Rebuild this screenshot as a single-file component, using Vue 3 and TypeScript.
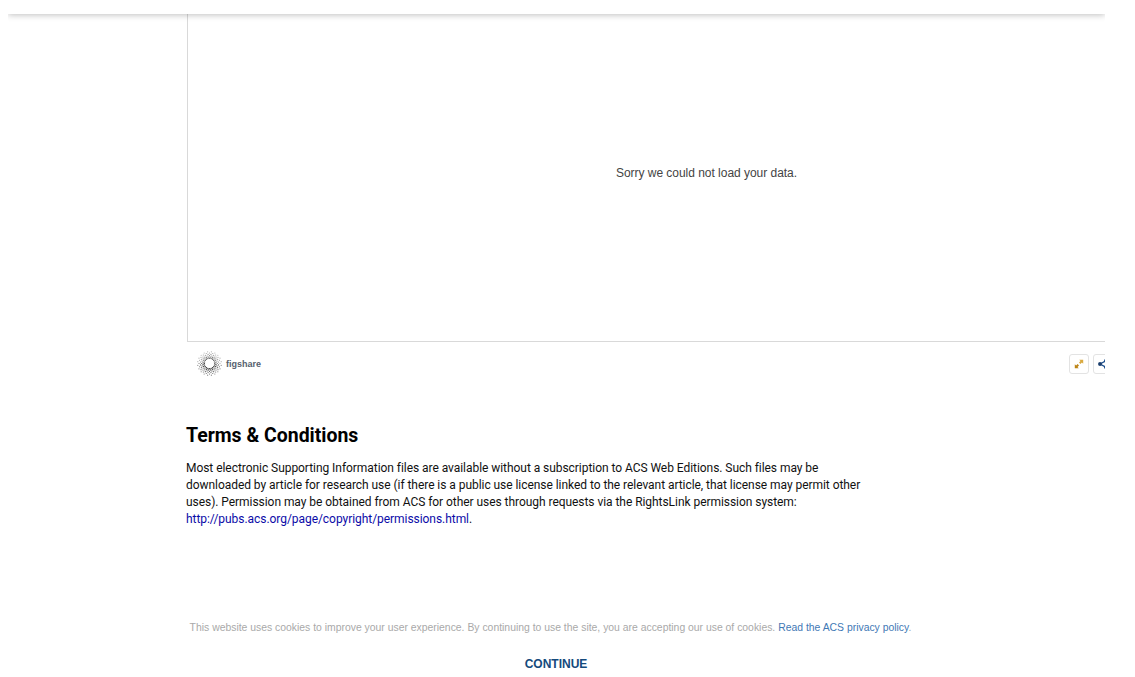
<script setup lang="ts">
const dots: { x: number; y: number; r: number; o: number }[] = []
for (let ring = 0; ring < 6; ring++) {
  const rad = 5.2 + ring * 1.32
  for (let i = 0; i < 20; i++) {
    const a = ((i + ring * 0.5) / 20) * Math.PI * 2
    dots.push({
      x: 12.5 + rad * Math.cos(a),
      y: 12.5 + rad * Math.sin(a),
      r: 0.68 - ring * 0.03,
      o: (Math.sin(a) > 0 ? 0.95 : 0.7) - ring * 0.06
    })
  }
}
</script>

<template>
  <div class="page">
    <div class="frame">
      <header class="topbar"></header>
      <main class="content">
        <section class="viewer">
          <div class="stage">
            <p class="error">Sorry we could not load your data.</p>
          </div>
          <div class="toolbar">
            <div class="brand">
              <svg class="logo" viewBox="0 0 25 25" width="25" height="25" aria-hidden="true">
                <circle v-for="(d, i) in dots" :key="i" :cx="d.x" :cy="d.y" :r="d.r" fill="#2a2a2a" :opacity="d.o" />
              </svg>
              <span class="brand-name">figshare</span>
            </div>
            <div class="actions">
              <button class="tool" type="button" aria-label="Expand">
                <svg viewBox="0 0 10 10" width="10" height="10" aria-hidden="true">
                  <path d="M5.2.8h4v4l-1.3-1.3-1.5 1.5-1.4-1.4 1.5-1.5z" fill="#d9a93f" />
                  <path d="M4.8 9.2h-4v-4l1.3 1.3 1.5-1.5 1.4 1.4-1.5 1.5z" fill="#bd8516" />
                </svg>
              </button>
              <button class="tool" type="button" aria-label="Share">
                <svg class="share" viewBox="0 0 10 10" width="12" height="12" aria-hidden="true">
                  <path d="M7.5 2.3 2.5 5l5 2.7" fill="none" stroke="#1c4f8c" stroke-width="1" />
                  <circle cx="7.5" cy="2.3" r="1.6" fill="#1c4f8c" />
                  <circle cx="2.5" cy="5" r="1.6" fill="#1c3f6e" />
                  <circle cx="7.5" cy="7.7" r="1.6" fill="#1c4f8c" />
                </svg>
              </button>
            </div>
          </div>
        </section>
        <section class="terms">
          <h2>Terms &amp; Conditions</h2>
          <p>
            Most electronic Supporting Information files are available without a subscription to ACS Web Editions. Such files may be
            downloaded by article for research use (if there is a public use license linked to the relevant article, that license may permit other
            uses). Permission may be obtained from ACS for other uses through requests via the RightsLink permission system:
            <a href="#">http://pubs.acs.org/page/copyright/permissions.html</a>.
          </p>
        </section>
        <section class="cookies">
          <p class="notice">
            This website uses cookies to improve your user experience. By continuing to use the site, you are accepting our use of cookies.
            <a href="#">Read the ACS privacy policy</a>.
          </p>
          <button class="continue" type="button">CONTINUE</button>
        </section>
      </main>
    </div>
  </div>
</template>

<style>
html, body { margin: 0; background: #fff; overflow: hidden; }
</style>

<style scoped>
.page {
  width: 1135px;
  height: 677px;
  overflow: hidden;
  background: #fff;
}
.frame {
  width: 1097px;
  height: 677px;
  margin-left: 8px;
  overflow: hidden;
  position: relative;
}
.topbar {
  height: 14px;
  background: #fff;
  box-shadow: 0 1px 6px rgba(0, 0, 0, 0.25);
  position: relative;
  z-index: 2;
  clip-path: inset(0 0 -12px 0);
}
.content {
  padding-left: 178px;
  width: 1000px;
}
.viewer {
  width: 919px;
}
.stage {
  width: 1038px;
  height: 328px;
  box-sizing: border-box;
  border-left: 1px solid #d9d9d9;
  border-bottom: 1px solid #d9d9d9;
  margin-left: 1px;
  padding-top: 151px;
}
.error {
  margin: 0;
  text-align: center;
  font: 12px/16px "Liberation Sans", Arial, sans-serif;
  letter-spacing: -0.03px;
  color: #444;
}
.toolbar {
  height: 43px;
  margin-left: 1px;
  padding: 7px 0 0 10px;
  box-sizing: border-box;
  display: flex;
  justify-content: space-between;
  align-items: flex-start;
}
.brand {
  display: flex;
  align-items: center;
  gap: 4px;
}
.logo { display: block; }
.brand-name {
  font: bold 9px/25px "Liberation Sans", Arial, sans-serif;
  color: #55606e;
  padding-top: 3px;
}
.actions {
  display: flex;
  gap: 4px;
  padding-top: 5px;
  margin-right: -8px;
}
.tool {
  width: 20px;
  height: 20px;
  padding: 0;
  background: #fff;
  border: 1px solid #e3e3e3;
  border-radius: 3px;
  display: flex;
  align-items: center;
  justify-content: center;
}
.share { flex: none; }
.terms {
  width: 680px;
  padding-top: 38px;
  font-family: Roboto, Arial, sans-serif;
}
.terms h2 {
  margin: 0 0 11px;
  font-size: 19.44px;
  line-height: 26px;
  font-weight: 700;
  color: #000;
}
.terms p {
  margin: 0;
  font-size: 12px;
  line-height: 17px;
  letter-spacing: -0.05px;
  color: #111;
}
.terms a { color: #0b0ba8; text-decoration: none; }
.cookies {
  padding-top: 92px;
  width: 740px;
  text-align: center;
  font-family: "Liberation Sans", Arial, sans-serif;
}
.notice {
  margin: 0;
  padding-right: 11px;
  font-size: 10.4px;
  line-height: 16px;
  white-space: nowrap;
  color: #a9a9a9;
}
.notice a { color: #3f78b5; text-decoration: none; }
.continue {
  display: block;
  margin: 20px auto 0;
  padding: 0;
  border: 0;
  background: none;
  font: bold 12px/16px "Liberation Sans", Arial, sans-serif;
  color: #144a7c;
}
</style>
